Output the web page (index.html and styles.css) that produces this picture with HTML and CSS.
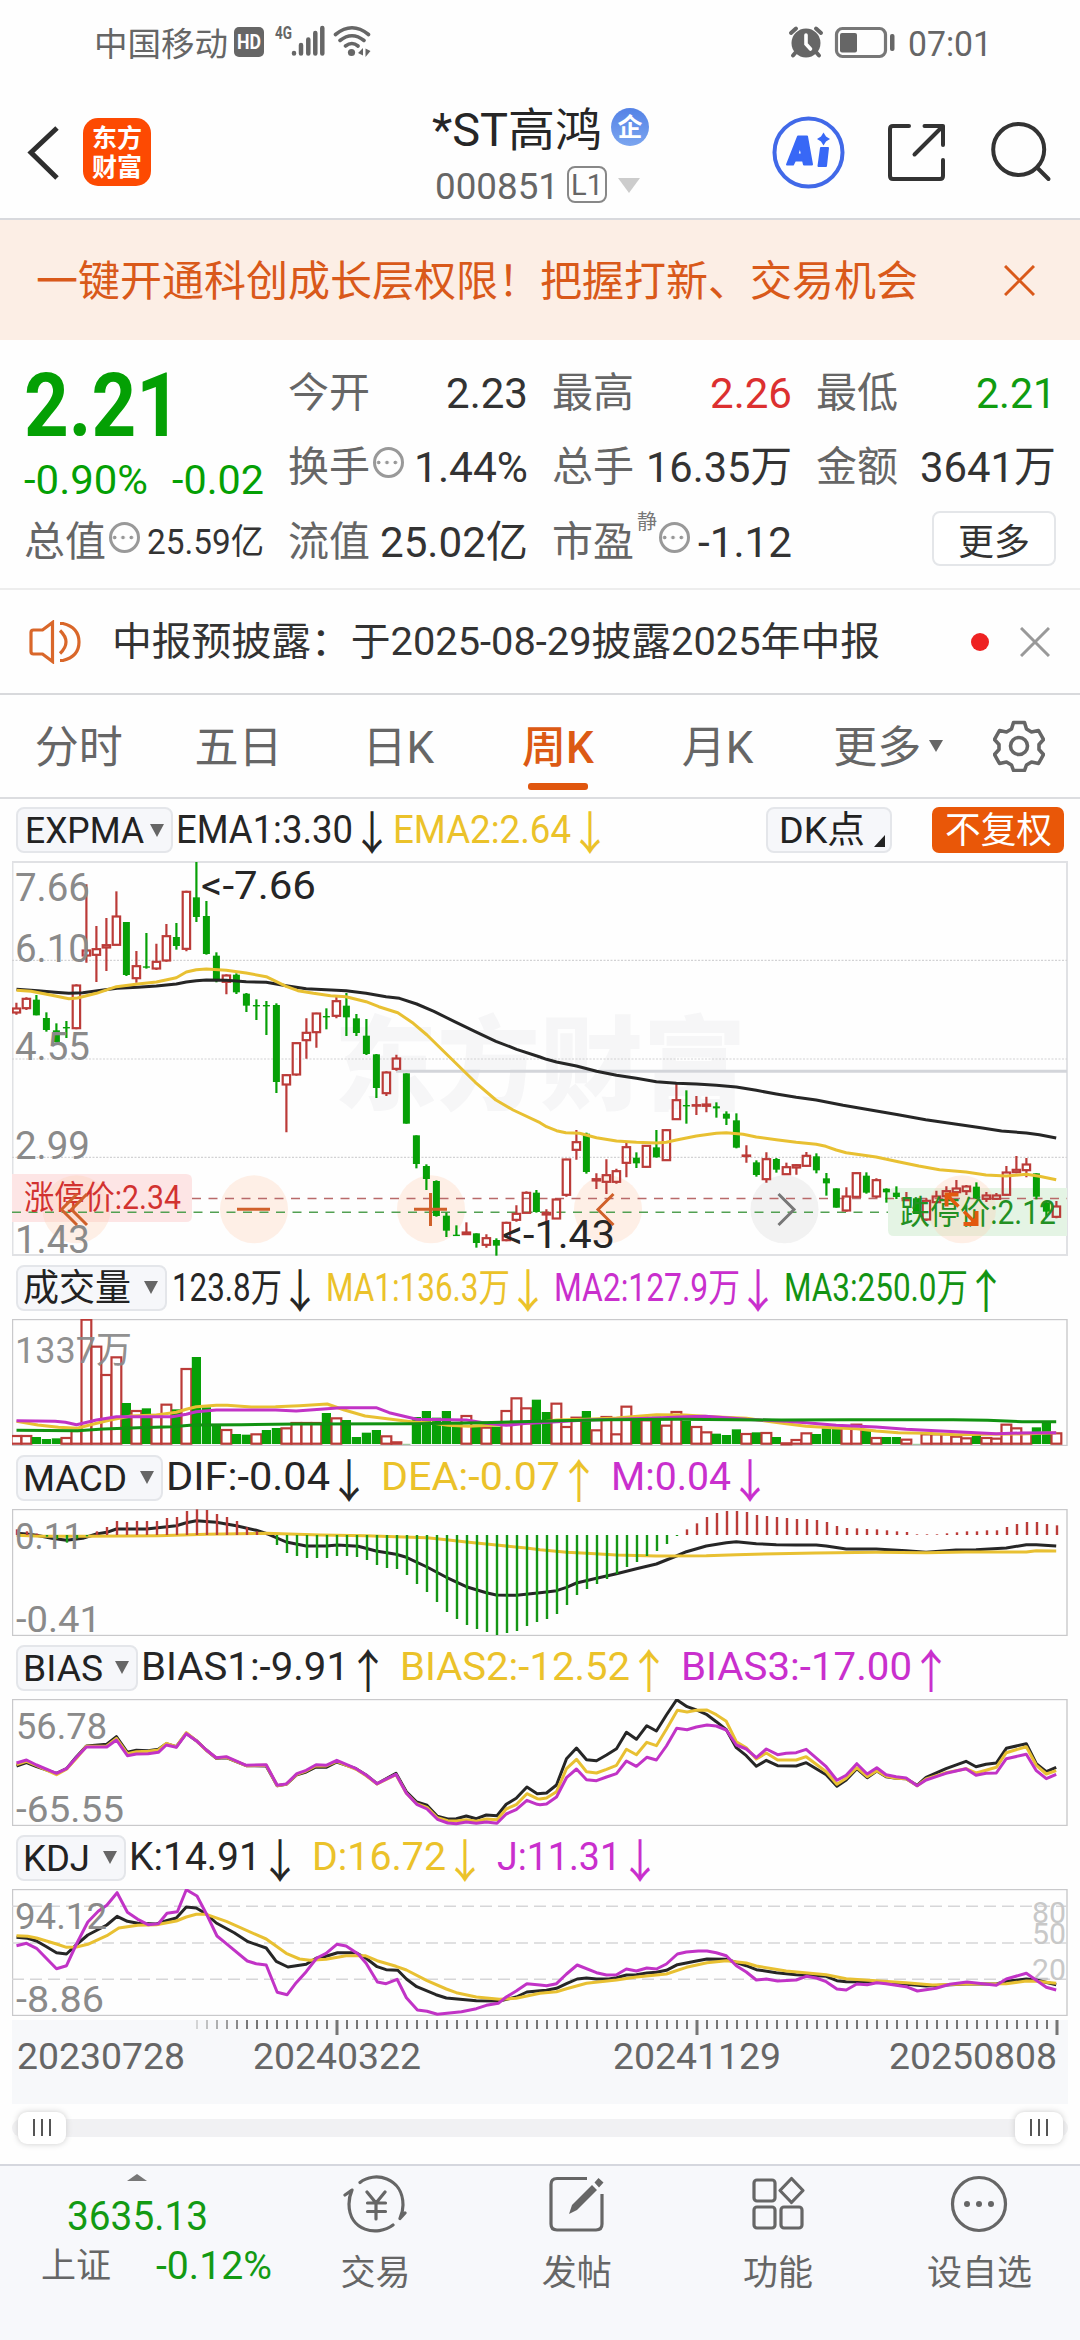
FILE: index.html
```html
<!DOCTYPE html>
<html lang="zh-CN">
<head>
<meta charset="utf-8">
<title>*ST高鸿 000851</title>
<link rel="stylesheet" href="styles.css">
</head>
<body>
<div class="status">
  <span class="carrier fit" data-w="134">中国移动</span>
  <svg class="status-left" width="146" height="40" viewBox="232 24 146 40">
    <rect x="234" y="28" width="30" height="30" rx="5" fill="#666"/>
    <text x="237" y="49.500" class="hd" textLength="24" lengthAdjust="spacingAndGlyphs">HD</text>
    <text x="275" y="40" class="g4" textLength="17" lengthAdjust="spacingAndGlyphs">4G</text>
    <g stroke="#666" stroke-width="4.500" stroke-linecap="round"><path d="M294 54v.5M301 46v8.500M308.300 40.500v14M315.300 34v20.500M322.300 29v25.500"/></g>
    <g fill="none" stroke="#666" stroke-width="3.600" stroke-linecap="round"><path d="M335.500 35.500Q352 22 368.500 35.500M340 41.500Q352 32 364 41.500M345.500 47Q352 42 358 47"/></g>
    <circle cx="351.500" cy="53.500" r="3.600" fill="#666"/>
    <path d="M358 54l5-5v7.500zM365.500 49.500v8.500l5-6z" fill="#666"/>
  </svg>
  <svg class="status-right" width="110" height="40" viewBox="787 23 110 40">
    <circle cx="806" cy="43" r="14.500" fill="#666"/>
    <path d="M791 33l5-4.500M821 33l-5-4.500M796 52l-3 3.500M816 52l3 3.500" stroke="#666" stroke-width="4" stroke-linecap="round"/>
    <path d="M806 35v9l4.500 5" stroke="#fff" stroke-width="3.600" fill="none" stroke-linecap="round"/>
    <rect x="836.500" y="28.500" width="49" height="28" rx="6" fill="none" stroke="#777" stroke-width="3.200"/>
    <rect x="840" y="33" width="17" height="19.500" rx="2" fill="#666"/>
    <rect x="890" y="34" width="4.500" height="17" rx="2" fill="#666"/>
  </svg>
  <span class="clock fit" data-w="84">07:01</span>
</div>

<header class="head">
  <svg class="back" width="40" height="60" viewBox="24 122 40 60"><path d="M57 128L31 152.500L57 178" fill="none" stroke="#2e2e2e" stroke-width="5"/></svg>
  <div class="logo"><span>东方</span><span>财富</span></div>
  <div class="title">
    <div class="name"><span class="fit" data-w="170">*ST高鸿</span><i class="qi">企</i></div>
    <div class="code"><span class="fit" data-w="124">000851</span><i class="lv"><b class="fit" data-w="32">L1</b></i><i class="caret"></i></div>
  </div>
  <svg class="head-icons" width="290" height="80" viewBox="768 112 290 80">
    <circle cx="808.500" cy="152.500" r="34" fill="none" stroke="#4169e8" stroke-width="4"/>
    <path fill="#3868f6" stroke="#3868f6" stroke-width="2" stroke-linejoin="round" fill-rule="evenodd" d="M798 136.500h9l5 28h-8l-1-4h-8l-2 4h-6zM800 146l-2.500 8.500h4.500zM821 148h7l-2 18h-7.500z"/>
    <path fill="#3868f6" d="M823.500 132.500l2.500 4 4 2.500-4 2.500-2.500 4-2.500-4-4-2.500 4-2.500z"/>
    <g fill="none" stroke="#333" stroke-width="4" stroke-linecap="round" stroke-linejoin="round">
      <path d="M909 126h-16q-3 0-3 3v47q0 3 3 3h47q3 0 3-3v-16M924.500 126h18.500v19M943 126l-28.500 28.500"/>
      <circle cx="1018.700" cy="149.500" r="25.500"/><path d="M1037.500 168l11 11"/>
    </g>
  </svg>
</header>

<section class="banner">
  <span class="fit" data-w="882">一键开通科创成长层权限！把握打新、交易机会</span>
  <svg width="31" height="31" viewBox="0 0 31 31"><path d="M1 1l29 29M30 1L1 30" stroke="#d9591a" stroke-width="3"/></svg>
</section>

<section class="quote">
  <div class="price">
    <div class="big"><span class="fit" data-w="157">2.21</span></div>
    <div class="chg"><span class="fit" data-w="124">-0.90%</span><span class="fit" data-w="92">-0.02</span></div>
  </div>
  <div class="cell"><label>今开</label><span class="fit" data-w="82">2.23</span></div>
  <div class="cell"><label>最高</label><span class="fit up" data-w="82">2.26</span></div>
  <div class="cell"><label>最低</label><span class="fit down" data-w="80">2.21</span></div>
  <div class="cell"><label>换手</label><i class="dots"></i><span class="fit" data-w="114">1.44%</span></div>
  <div class="cell"><label>总手</label><span class="fit" data-w="146">16.35万</span></div>
  <div class="cell"><label>金额</label><span class="fit" data-w="136">3641万</span></div>
  <div class="cell small"><label>总值</label><i class="dots"></i><span class="fit" data-w="117">25.59亿</span></div>
  <div class="cell"><label>流值</label><span class="fit" data-w="148">25.02亿</span></div>
  <div class="cell"><label>市盈</label><sup>静</sup><i class="dots"></i><span class="fit" data-w="94">-1.12</span></div>
  <div class="cell"><button class="more"><span class="fit" data-w="72">更多</span></button></div>
</section>

<section class="notice">
  <svg width="52" height="44" viewBox="29 619 52 44"><g fill="none" stroke="#d9672a" stroke-width="3.200"><path d="M52.500 621.500v39l-10-7.500h-9q-2.500 0-2.500-2.500v-19q0-2.500 2.500-2.500h9zM60 629.500q12 11.500 0 23M60 622.500h3q16 4 16 18.500t-16 18.500h-3"/></g></svg>
  <span class="fit news" data-w="768">中报预披露：于2025-08-29披露2025年中报</span>
  <i class="reddot"></i>
  <svg width="30" height="30" viewBox="0 0 30 30"><path d="M1 1l28 28M29 1L1 29" stroke="#999" stroke-width="3"/></svg>
</section>

<nav class="tabs">
  <a>分时</a><a>五日</a><a>日K</a><a class="on">周K</a><a>月K</a><a class="has-menu">更多<i></i></a>
  <svg width="52" height="52" viewBox="0 0 52 52"><path fill="none" stroke="#666" stroke-width="3.600" stroke-linejoin="round" d="M20.500 2.500h11l2 6.500 5 3 7-1.500 5 9-4.500 5v5l4.500 5-5 9-7-1.500-5 3-2 5.500h-11l-2-5.500-5-3-7 1.500-5-9 4.500-5v-5l-4.500-5 5-9 7 1.500 5-3z"/><circle cx="26" cy="26" r="8.500" fill="none" stroke="#666" stroke-width="3.600"/></svg>
</nav>

<main>
  <div class="row r1">
    <span class="pick" style="width:157px"><b class="fit" data-w="119">EXPMA</b><i></i></span>
    <span class="fit k" data-w="177">EMA1:3.30</span><em class="k">↓</em>
    <span class="fit y" data-w="178">EMA2:2.64</span><em class="y">↓</em>
    <span class="pick dk"><b class="fit" data-w="86">DK点</b><i></i></span>
    <span class="adj"><b class="fit" data-w="107">不复权</b></span>
  </div>
  <svg id="main" width="1056" height="395" viewBox="12 861 1056 395"></svg>

  <div class="row r2">
    <span class="pick" style="width:151px"><b class="fit" data-w="108">成交量</b><i></i></span>
    <span class="fit k" data-w="110">123.8万</span><em class="k">↓</em>
    <span class="fit y" data-w="184">MA1:136.3万</span><em class="y">↓</em>
    <span class="fit p" data-w="186">MA2:127.9万</span><em class="p">↓</em>
    <span class="fit g" data-w="184">MA3:250.0万</span><em class="g">↑</em>
  </div>
  <svg id="vol" width="1056" height="127" viewBox="12 1319 1056 127"></svg>

  <div class="row r3">
    <span class="pick" style="width:147px"><b class="fit" data-w="104">MACD</b><i></i></span>
    <span class="fit k" data-w="164">DIF:-0.04</span><em class="k">↓</em>
    <span class="fit y" data-w="179">DEA:-0.07</span><em class="y">↑</em>
    <span class="fit p" data-w="120">M:0.04</span><em class="p">↓</em>
  </div>
  <svg id="macd" width="1056" height="127" viewBox="12 1509 1056 127"></svg>

  <div class="row r4">
    <span class="pick" style="width:122px"><b class="fit" data-w="80">BIAS</b><i></i></span>
    <span class="fit k" data-w="208">BIAS1:-9.91</span><em class="k">↑</em>
    <span class="fit y" data-w="230">BIAS2:-12.52</span><em class="y">↑</em>
    <span class="fit p" data-w="231">BIAS3:-17.00</span><em class="p">↑</em>
  </div>
  <svg id="bias" width="1056" height="127" viewBox="12 1699 1056 127"></svg>

  <div class="row r5">
    <span class="pick" style="width:110px"><b class="fit" data-w="67">KDJ</b><i></i></span>
    <span class="fit k" data-w="132">K:14.91</span><em class="k">↓</em>
    <span class="fit y" data-w="134">D:16.72</span><em class="y">↓</em>
    <span class="fit p" data-w="124">J:11.31</span><em class="p">↓</em>
  </div>
  <svg id="kdj" width="1056" height="127" viewBox="12 1889 1056 127"></svg>

  <div class="axis">
    <svg id="ticks" width="1056" height="16" viewBox="12 2020 1056 16"></svg>
    <div class="dates"><span class="fit" data-w="168">20230728</span><span class="fit" data-w="168">20240322</span><span class="fit" data-w="168">20241129</span><span class="fit" data-w="168">20250808</span></div>
  </div>
  <div class="slider"><div class="track"><i></i><i></i></div></div>
</main>

<footer>
  <div class="index">
    <i class="upcaret"></i>
    <div><span class="fit" data-w="141">3635.13</span></div>
    <div class="line2"><label>上证</label><span class="fit" data-w="116">-0.12%</span></div>
  </div>
  <div class="item"><svg viewBox="0 0 66 60" width="66" height="60"><g fill="none" stroke="#666" stroke-width="3.200" stroke-linecap="round" stroke-linejoin="round"><path d="M17 8.500C31-3 60 3 60 31c0 5-1 9-3 13.500l5-5.500M50 51C34 63 6 57 6 30q0-7 3-14l-7 5M24 18l9 11 9-11M33 29v16M24.500 29h18M24.500 37.500h18"/></g></svg><span>交易</span></div>
  <div class="item"><svg viewBox="0 0 66 60" width="66" height="60"><path d="M43 4.500H13q-6 0-6 6V50q0 6 6 6h39q6 0 6-6V20" fill="none" stroke="#666" stroke-width="3.200"/><path d="M25 40l3-9 20-20 5 5-20 20zM50.500 8.500l4-4.500 5 4.500-4.500 5z" fill="#666"/></svg><span>发帖</span></div>
  <div class="item"><svg viewBox="0 0 66 60" width="66" height="60"><g fill="none" stroke="#666" stroke-width="3.200"><rect x="9" y="6" width="21" height="21" rx="3"/><rect x="9" y="33" width="21" height="21" rx="3"/><rect x="36" y="33" width="21" height="21" rx="3"/><path d="M46.500 4.500L58 16.500 46.500 28.500 35 16.500z" stroke-linejoin="round"/></g></svg><span>功能</span></div>
  <div class="item"><svg viewBox="0 0 66 60" width="66" height="60"><circle cx="33" cy="30" r="26.500" fill="none" stroke="#666" stroke-width="3.200"/><g fill="#666"><circle cx="21" cy="30" r="3"/><circle cx="33" cy="30" r="3"/><circle cx="45" cy="30" r="3"/></g></svg><span>设自选</span></div>
</footer>
<script src="chart.js"></script>
</body>
</html>
```

FILE: styles.css
```css
* { box-sizing: border-box; }
body { margin: 0; width: 1080px; height: 2340px; overflow: hidden; background: #fefefe; color: #333; font-family: Roboto, "Noto Sans CJK SC", sans-serif; line-height: 1; }
i, em, b { font-style: normal; font-weight: inherit; }
svg { display: block; flex: none; }
.fit { display: block; flex: none; white-space: nowrap; transform-origin: 0 50%; }

.status { height: 86px; display: flex; align-items: center; padding-left: 94px; color: #666; font-size: 33px; }
.carrier, .clock { padding-top: 2px; }
.status-left { margin-left: 4px; }
.status-right { margin-left: 409px; }
.clock { margin-left: 11px; font-size: 35px; }
.hd { font: bold 20px Roboto; fill: #fff; }
.g4 { font: bold 18px Roboto; fill: #666; }

.head { height: 134px; border-bottom: 2px solid #d8d9dd; display: flex; align-items: center; padding-left: 24px; }
.back { margin-left: 0; }
.logo { margin-left: 19px; width: 68px; height: 68px; border-radius: 15px; background: #fd4a02; color: #fff; font-weight: 700; font-size: 25px; display: flex; flex-direction: column; align-items: center; justify-content: center; gap: 4px; padding-top: 2px; }
.title { margin-left: 281px; width: 320px; height: 112px; }
.name { display: flex; align-items: center; height: 60px; font-size: 46px; color: #262626; margin-top: 1px; }
.name .fit { padding-top: 6px; }
.qi { margin-left: 9px; width: 38px; height: 38px; border-radius: 50%; background: linear-gradient(#5482e6, #7ba5ef); color: #fff; font-size: 25px; font-weight: 700; display: flex; align-items: center; justify-content: center; }
.code { display: flex; align-items: center; font-size: 37px; color: #666; margin-top: 7px; height: 38px; padding-left: 3px; }
.code > .fit { padding-top: 6px; }
.lv { margin: 3px 0 0 8px; width: 40px; height: 37px; border: 2px solid #888; border-radius: 8px; font-size: 30px; display: flex; align-items: center; justify-content: center; }
.caret { margin: 4px 0 0 11px; border: 11px solid transparent; border-top: 15px solid #ccc; border-bottom: 0; }
.head-icons { margin-left: 16px; }

.banner { height: 120px; background: #fceee5; color: #d9591a; font-size: 42px; display: flex; align-items: center; justify-content: space-between; padding: 0 45px 0 36px; }
.banner .fit { padding-top: 4px; }

.quote { height: 250px; border-bottom: 2px solid #ededed; padding: 15px 24px 0; display: grid; grid-template-columns: repeat(4, 240px); grid-template-rows: 74px 75px 74px; column-gap: 24px; }
.price { grid-row: 1 / 3; grid-column: 1; color: #04a004; }
.big { font-size: 89px; font-weight: 700; height: 98px; padding-top: 6px; }
.chg { display: flex; justify-content: space-between; font-size: 41px; height: 54px; align-items: center; }
.cell { display: flex; align-items: center; justify-content: space-between; font-size: 43px; padding-top: 2px; }
.cell label { font-size: 41px; color: #666; flex: none; margin-right: 1px; }
.small .fit { font-size: 35px; }
.up { color: #dc3030; }
.down { color: #109c10; }
.dots { width: 31px; height: 31px; border: 3px solid #999; border-radius: 50%; margin: 0 auto 10px 2px; flex: none; background: radial-gradient(circle, #999 1.500px, transparent 2.200px) -1.500px 0 / 9px 25px round; }
.cell sup { font-size: 20px; color: #777; align-self: flex-start; margin: 6px 0 0 2px; line-height: 20px; vertical-align: baseline; }
.more { margin-left: auto; width: 124px; height: 55px; border: 2px solid #e4e6e9; border-radius: 8px; background: #fff; font: 36px/1 "Noto Sans CJK SC", sans-serif; color: #333; display: flex; align-items: center; justify-content: center; padding: 0; margin-top: -7px; }

.notice { height: 105px; border-bottom: 2px solid #d8d9dc; display: flex; align-items: center; padding: 0 30px 0 29px; font-size: 39px; }
.news { margin-left: 31px; padding-top: 2px; }
.reddot { width: 18px; height: 18px; border-radius: 50%; background: #ee2222; margin: 0 31px 0 auto; }

.tabs { height: 104px; border-bottom: 2px solid #dcdde0; display: flex; align-items: stretch; color: #666; font-size: 44px; }
.tabs a { width: 159.700px; display: flex; align-items: center; justify-content: center; position: relative; padding: 4px 2px 0 0; }
.tabs .on { color: #dc5a14; font-weight: 500; }
.tabs .on::after { content: ""; position: absolute; left: 49px; bottom: 7px; width: 60px; height: 7px; border-radius: 3px; background: #e0560e; }
.has-menu i { border: 7px solid transparent; border-top: 12px solid #666; border-bottom: 0; margin: -4px -22px 0 8px; }
.tabs svg { align-self: center; margin-left: 35px; }

main { padding: 0 12px; }
.row { height: 63px; display: flex; align-items: center; padding-left: 4px; font-size: 39px; }
.row em { width: 20px; display: flex; justify-content: center; font-family: "Noto Sans CJK SC", sans-serif; font-size: 38px; margin-left: 9px; flex: none; transform: scale(1.12, 1.22); }
.pick { height: 46px; border: 2px solid #e4e6ea; border-radius: 8px; background: #f6f7fa; display: flex; align-items: center; justify-content: space-between; padding: 0 7px 0 5px; font-size: 37px; color: #222; flex: none; margin-right: 3px; }
.pick i { border: 7.500px solid transparent; border-top: 13px solid #666; border-bottom: 0; }
.pick .fit, .adj .fit { padding-top: 1px; }
.r1 { height: 62px; font-size: 38px; }
.r1 .pick { padding-left: 7px; }
.r1 em + .fit { margin-left: 11px; }
.r1 .dk { width: 126px; margin: 0 0 0 auto; padding: 0 5px 0 11px; }
.r1 .dk i { border: 0; width: 11px; height: 12px; background: #222; clip-path: polygon(100% 0, 100% 100%, 0 100%); align-self: flex-end; margin-bottom: 4px; }
.adj { width: 132px; height: 46px; border-radius: 7px; background: #e95708; color: #fff; margin: 0 4px 0 40px; display: flex; align-items: center; justify-content: center; font-size: 36px; }
.r2 .pick { margin-right: 5px; }
.r2 > .fit { padding-top: 2px; }
.r2 em { margin-left: 8px; }
.r2 em + .fit { margin-left: 16px; }
.r3 em + .fit, .r4 em + .fit, .r5 em + .fit { margin-left: 22px; }
.k { color: #262626; } .y { color: #ebc22a; } .p { color: #c92fcd; } .g { color: #139313; }
main svg text { font-family: Roboto, "Noto Sans CJK SC", sans-serif; }

.axis { margin-top: 4px; height: 84px; background: #f7f8fa; }
.dates { display: flex; padding: 0 10px 0 5px; margin-top: 1px; font-size: 37px; color: #666; height: 38px; align-items: center; }
.dates .fit:nth-child(2) { margin-left: 68px; }
.dates .fit:nth-child(3) { margin-left: 192px; }
.dates .fit:nth-child(4) { margin-left: 108px; }
.slider { height: 60px; padding-top: 15px; }
.track { height: 18px; border-radius: 9px; background: #f1f1f3; display: flex; align-items: center; justify-content: space-between; padding: 0 5px 0 6px; }
.track i { width: 48px; height: 32px; border-radius: 9px; box-shadow: 0 0 6px #ccc; background: linear-gradient(90deg, #555 2px, transparent 2px) 15px 7px / 7.500px 17px no-repeat, linear-gradient(90deg, #555 2px, transparent 2px) 23px 7px / 7.500px 17px no-repeat, linear-gradient(90deg, #555 2px, transparent 2px) 31px 7px / 7.500px 17px no-repeat, #fff; }

footer { height: 176px; border-top: 2px solid #d5d7de; background: #f7f8fb; display: flex; }
.index { width: 275px; font-size: 41px; color: #139a13; padding-top: 8px; display: flex; flex-direction: column; align-items: center; }
.upcaret { border: 10px solid transparent; border-bottom: 7px solid #777; border-top: 0; margin-bottom: 15px; }
.line2 { display: flex; align-items: center; justify-content: space-between; width: 231px; margin: 8px 0 0 38px; font-size: 38px; height: 42px; }
.line2 label { color: #666; font-size: 35px; }
.item { width: 201.300px; display: flex; flex-direction: column; align-items: center; padding-top: 8px; font-size: 35px; color: #666; gap: 22px; }
```

FILE: chart.js
```js
// Squeeze or stretch each fitted label to its cell width.
document.querySelectorAll('.fit').forEach(function (el) {
  var r = document.createRange();
  r.selectNodeContents(el);
  var natural = r.getBoundingClientRect().width;
  var w = +el.dataset.w;
  el.style.transform = 'scaleX(' + w / natural + ')';
  // the margin makes up the difference, so neighbours see the scaled width
  el.style.width = natural + 'px';
  el.style.marginRight = (w - natural) + 'px';
});

var RED = '#bb3b38', GREEN = '#07a007', K = '#262626', Y = '#e8c032', P = '#c133c6';
var SX = 1568 / 540;
function px(i) { return 16.4 + 10 * i; }
function text(x, y, s, w, size, color, extra) {
  return '<text x="' + x + '" y="' + y + '" font-size="' + size + '" fill="' + color + '" textLength="' + w + '" lengthAdjust="spacingAndGlyphs" ' + (extra || '') + '>' + s.replace('<', '&lt;') + '</text>';
}
function frame(y, h, c, sw) { return '<rect x="12.5" y="' + y + '" width="1054.500" height="' + h + '" fill="none" stroke="' + c + '" stroke-width="' + sw + '"/>'; }
// Two halves of a polyline, separated by "|", each a list of x,y pairs.
function line(data, top, color, w) {
  var pts = [];
  data.split('|').forEach(function (half, h) {
    half.trim().split(/\s+/).forEach(function (p) {
      var a = p.split(',');
      pts.push((h * 540 + a[0] / SX).toFixed(1) + ',' + (top + a[1] / 3).toFixed(1));
    });
  });
  return '<polyline fill="none" stroke-linejoin="round" stroke="' + color + '" stroke-width="' + (w || 3) + '" points="' + pts.join(' ') + '"/>';
}
function put(id, s) { document.getElementById(id).innerHTML = s; }

// colour, high, body top, body bottom, low
var candles = 'R458,474,489,494 R442,445,476,480 G435,449,496,496 G487,504,540,545 G520,541,577,577 G513,531,535,564 R403,405,536,538 R103,300,318,338 R228,296,316,396 R204,284,294,363 R124,198,286,286 G216,216,375,378 R303,347,386,398 G249,349,353,356 R281,334,357,360 R222,257,333,335 G219,261,288,299 R122,124,298,304 G36,142,201,216 G153,198,312,314 G307,317,393,397 R373,375,397,433 G370,374,427,432 G429,431,467,486 G448,465,469,510 G453,465,468,555 G460,465,696,729 R672,674,705,847 R577,578,675,677 R505,547,572,626 R488,489,548,593 G475,498,502,538 R440,452,499,505 G429,467,502,558 G492,505,549,558 G507,557,612,615 G612,613,714,744 R664,666,731,738 R614,624,658,662 G670,670,821,821 G856,856,942,955 G943,948,987,1020 G991,993,1098,1100 G1088,1097,1142,1161 G1126,1154,1158,1158 R1117,1146,1154,1154 G1150,1150,1179,1193 R1153,1163,1186,1193 G1165,1170,1187,1217 R1115,1117,1172,1174 R1066,1090,1111,1115 R1024,1027,1090,1090 G1020,1028,1086,1088 R1078,1087,1095,1117 R1046,1047,1107,1107 R926,927,1036,1040 R840,875,901,929 G848,851,966,971 R970,986,993,1017 R928,974,997,1032 R956,962,997,1001 R879,890,940,982 G907,923,940,954 R885,886,952,953 G840,892,922,923 R837,839,932,933 R699,749,809,809 G721,765,768,821 R738,764,768,795 R740,762,769,787 G757,769,775,803 G784,791,806,825 G790,811,893,895 R886,915,919,938 G931,937,975,980 R907,926,989,998 G924,927,959,968 R938,950,974,974 R942,944,954,974 R906,916,949,950 G910,919,961,970 G969,985,1000,1037 G1015,1015,1073,1073 R1012,1038,1083,1085 R967,968,1042,1044 G967,977,1028,1031 R985,989,1041,1044 G1015,1016,1027,1058 G1009,1028,1041,1047 R1026,1044,1052,1052 G1045,1045,1092,1092 R1045,1051,1110,1113 R1022,1038,1058,1060 R1009,1022,1040,1043 R990,1014,1028,1030 R1005,1008,1025,1035 G997,1010,1045,1047 R1026,1035,1048,1056 R1029,1035,1048,1050 R948,966,1036,1037 R918,958,968,970 R924,942,962,982 G970,970,1040,1048 G1055,1058,1085,1100 R1053,1068,1102,1105'.split(' ');

(function drawMain() {
  var s = frame(862, 393, '#e0e1e4', 2);
  s += text(334, 1102, '东方财富', 412, 102, '#f6f6f7', 'font-weight="900"');
  [960.3, 1059, 1157.3].forEach(function (y) { s += '<path d="M12 ' + y + 'H1067" stroke="#d2d2d4" stroke-width="1.200" stroke-dasharray="2 1.500"/>'; });
  s += '<path d="M396 1071.300H1067" stroke="#d3d5da" stroke-width="3"/>';
  s += '<path d="M12 1174h174q6 0 6 6v36q0 6-6 6H12z" fill="#fde5e5"/><path d="M1067 1188H894q-6 0-6 6v36q0 6 6 6h173z" fill="#e4f4e4"/>';
  [76.5, 254, 431, 608, 784.5, 962].forEach(function (x, i) { s += '<circle cx="' + x + '" cy="1209.300" r="34" fill="' + (i === 4 ? '#e8e8e8' : '#ffcdb0') + '" fill-opacity="' + (i === 4 ? .55 : .3) + '"/>'; });
  s += '<path d="M192 1198.500H1067" stroke="#b96a6a" stroke-width="1.500" stroke-dasharray="9 7.500"/><path d="M12 1212.300H888" stroke="#52a052" stroke-width="1.500" stroke-dasharray="9 7.500"/>';
  candles.forEach(function (c, i) {
    var v = c.slice(1).split(',').map(function (n) { return 850 + n / 3; }), x = px(i);
    if (c[0] === 'G') {
      s += '<path d="M' + x + ' ' + v[0] + 'V' + v[3] + '" stroke="' + GREEN + '" stroke-width="2.200"/><rect x="' + (x - 3.5) + '" y="' + v[1] + '" width="7" height="' + Math.max(1.4, v[2] - v[1]) + '" fill="' + GREEN + '"/>';
    } else {
      s += '<path d="M' + x + ' ' + v[0] + 'V' + v[1] + 'M' + x + ' ' + v[2] + 'V' + v[3] + '" stroke="' + RED + '" stroke-width="2.200"/><rect x="' + (x - 3.7) + '" y="' + (v[1] + 0.5) + '" width="7.400" height="' + Math.max(0.5, v[2] - v[1] - 1) + '" fill="none" stroke="' + RED + '" stroke-width="2.200"/>';
    }
  });
  s += line('48,418 110,422 160,427 200,430 240,428 300,420 340,415 400,412 454,408 512,402 541,396 570,392 599,390 657,391 715,395 773,397 831,407 889,416 947,419 1005,422 1063,430 1121,440 1160,445 1210,462 1260,484 1320,515 1380,545 1440,574 1500,598 1568,621|19,628 48,636 106,648 164,664 222,676 280,685 338,695 396,700 454,702 512,706 570,711 628,721 686,732 744,742 802,750 880,766 960,780 1040,794 1120,809 1200,821 1280,833 1340,843 1412,849 1450,854 1499,864', 850, K);
  s += line('48,421 90,424 150,436 200,446 225,444 280,430 338,410 400,402 454,396 512,383 541,366 570,359 599,357 657,361 715,369 773,380 831,409 865,422 910,430 960,437 1005,440 1063,455 1100,470 1155,488 1200,520 1240,555 1300,616 1380,697 1440,750 1490,780 1568,818|19,830 48,842 75,848 115,850 164,863 222,873 280,877 338,879 367,877 396,870 454,858 512,850 541,848 590,853 628,861 686,869 744,877 802,883 830,889 860,900 889,908 976,921 1040,935 1100,948 1160,959 1237,966 1295,975 1354,978 1412,973 1450,979 1499,989', 850, Y);
  [['7.66', 901], ['6.10', 962], ['4.55', 1060], ['2.99', 1159], ['1.43', 1252.5]].forEach(function (l) { s += text(15, l[1], l[0], 75, 38.5, '#8a8a8a'); });
  s += text(201, 899, '<-7.66', 115, 39, K) + text(502, 1247.5, '<-1.43', 113, 39, K);
  s += text(24, 1209, '涨停价:2.34', 157, 33, '#d23230') + text(900, 1223.5, '跌停价:2.12', 156, 33, '#239023');
  s += '<g fill="none" stroke="#d0602a" stroke-width="3"><path d="M77 1194L61.500 1209.500L77 1225M87 1194L71.500 1209.500L87 1225M237 1209.300h33M414 1209.300h33M430.500 1193v33M613.500 1194L598 1209.500L613.500 1225"/><path stroke="#777" d="M778.500 1194L794 1209.500L778.500 1225"/><path stroke="#e2590f" d="M948 1196l10.500 10.500M974.500 1222L964 1211.500" stroke-width="3.500"/></g><path fill="#e2590f" d="M944.500 1192.500h14v4l-7 0-3 3v7h-4zM978.500 1226h-15v-4h7l4-4v-7h4z"/>';
  put('main', s);
})();

(function drawVolume() {
  var tops = [525,525,531,537,535,531,510,176,257,342,289,429,450,445,462,431,448,324,291,442,494,507,522,524,520,510,504,502,486,486,486,459,472,480,531,518,510,526,544,553,471,453,473,453,490,465,500,500,500,450,412,442,419,456,428,498,470,453,508,468,520,437,475,478,470,494,453,483,498,514,521,525,508,519,517,516,531,547,537,517,522,505,505,500,491,510,531,531,531,536,553,520,520,520,527,532,525,531,533,491,502,516,502,488,517];
  // bars whose colour differs from the candle above them
  var flip = { 5: 'R', 24: 'R', 25: 'G', 44: 'G', 53: 'G' };
  var s = frame(1319.5, 126, '#c9c9cb', 1.4);
  tops.forEach(function (t, i) {
    var x = px(i), y = 1260 + t / 3;
    if (t > 550) { s += '<path d="M' + (x - 4) + ' 1444.300h8" stroke="#8cbf8c"/>'; return; }
    if ((flip[i] || candles[i][0]) === 'G') s += '<rect x="' + (x - 4.6) + '" y="' + y + '" width="9.200" height="' + (1444 - y) + '" fill="' + GREEN + '"/>';
    else s += '<rect x="' + (x - 4.9) + '" y="' + (y + 1) + '" width="9.800" height="' + Math.max(1, 1442.7 - y) + '" fill="#fff" stroke="' + RED + '" stroke-width="2.200"/>';
  });
  s += line('48,484 110,495 170,502 225,505 260,495 320,480 380,468 454,465 512,457 541,448 570,440 628,436 660,436 730,441 800,440 870,437 950,432 1000,450 1060,468 1130,477 1200,486 1260,490 1300,496 1360,499 1440,495 1490,492 1568,487|48,480 135,478 222,474 338,464 420,465 500,470 600,475 660,484 715,491 773,499 860,504 920,506 976,513 1040,518 1121,520 1208,524 1300,523 1400,522 1499,518', 1260, Y);
  s += line('48,482 160,484 190,487 222,494 280,480 338,470 500,470 541,463 570,455 628,450 800,450 860,453 930,448 990,443 1092,443 1130,458 1210,478 1354,480 1412,490 1470,496 1530,490 1568,488|135,480 222,478 338,474 425,470 480,469 540,473 600,478 715,484 773,488 860,496 976,501 1063,508 1150,512 1237,517 1325,521 1400,519 1499,518', 1260, P);
  s += line('48,511 225,512 300,507 400,503 500,500 560,495 700,494 860,492 1200,491 1400,488 1568,484|48,482 200,479 400,478 700,480 900,479 1200,479 1300,481 1400,485 1499,485', 1260, '#129212');
  s += text(15, 1363, '1337万', 117, 37, '#8a8a8a', 'fill-opacity=".95"');
  put('vol', s);
})();

(function drawMacd() {
  var ends = [808,814,821,830,837,848,836,829,814,801,783,786,783,783,783,774,771,753,748,750,762,771,783,802,814,824,855,879,888,894,894,894,888,888,891,900,915,924,927,945,972,996,1026,1056,1077,1095,1107,1116,1125,1119,1113,1098,1086,1077,1062,1035,1005,987,972,957,942,921,906,888,873,852,828,808,790,771,759,753,753,756,765,768,771,774,777,777,780,786,798,804,805,807,808,811,814,816,823,823,823,820,817,814,814,811,811,801,792,786,786,792,796];
  var s = frame(1509.5, 126, '#c9c9cb', 1.4);
  s += line('48,820 77,822 106,826 150,835 193,841 240,835 280,822 310,817 338,807 425,807 512,797 541,788 570,782 628,787 686,797 744,811 780,823 831,846 889,858 947,858 980,855 1040,859 1092,873 1150,883 1180,892 1240,921 1296,952 1354,980 1412,998 1441,1005 1500,1006 1568,998|19,996 48,992 77,982 106,969 164,955 222,941 280,926 338,912 396,888 425,875 483,858 541,848 570,845 628,851 686,854 744,855 802,855 831,858 889,867 976,867 1063,872 1121,877 1208,870 1266,869 1354,864 1412,854 1441,854 1499,858', 1260, K);
  s += line('48,826 120,829 250,829 460,827 600,823 773,820 930,825 1063,827 1150,830 1240,833 1296,839 1354,846 1441,855 1528,864 1568,869|77,877 135,880 222,885 338,888 483,887 570,884 686,881 802,879 976,877 1121,878 1237,876 1412,876 1441,872 1499,873', 1260, Y);
  ends.forEach(function (e, i) { s += '<path d="M' + (px(i) + 0.6) + ' 1535V' + (1260 + e / 3) + '" stroke="' + (e > 825 ? '#149614' : RED) + '" stroke-width="2.400"/>'; });
  s += text(15, 1549, '0.11', 68, 37, '#8a8a8a') + text(16, 1632, '-0.41', 85, 37, '#8a8a8a');
  put('macd', s);
})();

(function drawBias() {
  var s = frame(1699.5, 126, '#c9c9cb', 1.4);
  s += line('48,348 77,338 106,350 164,370 193,356 222,320 251,288 310,283 338,260 370,307 396,301 430,302 460,298 483,281 512,290 541,250 570,272 599,300 628,325 657,323 715,347 773,348 805,407 831,403 862,374 889,366 918,351 947,352 978,336 1034,356 1063,375 1095,401 1150,370 1180,425 1210,456 1240,466 1270,499 1300,507 1325,506 1354,498 1383,506 1412,495 1443,497 1470,463 1499,445 1530,411 1560,431|19,429 48,405 77,326 106,294 135,329 164,332 193,315 222,296 251,247 280,268 310,227 338,243 367,195 397,149 427,170 454,180 485,194 512,215 541,239 570,293 599,317 628,349 657,331 690,347 744,348 773,338 831,374 862,409 889,390 920,356 950,383 978,363 1005,380 1034,385 1063,386 1095,406 1121,382 1179,356 1237,334 1266,350 1295,343 1325,339 1354,295 1412,281 1441,341 1470,365 1499,352', 1650, K);
  s += line('48,344 77,334 106,347 164,374 193,358 222,325 251,289 310,288 338,265 370,311 396,305 430,304 460,300 483,280 512,290 541,248 570,272 599,301 628,324 657,322 715,347 773,346 805,407 831,403 862,373 889,363 918,347 947,348 978,334 1034,358 1063,377 1095,402 1150,374 1180,430 1210,461 1240,472 1270,503 1300,512 1325,513 1354,509 1383,514 1412,507 1443,509 1470,477 1499,464 1530,431 1560,446|0,447 19,444 48,425 77,356 106,328 135,365 164,369 193,358 222,346 251,298 280,314 310,277 338,287 367,238 399,181 427,186 454,181 485,180 512,194 541,214 570,275 599,293 628,327 657,309 690,330 744,330 773,320 831,365 862,403 889,385 920,353 950,380 978,362 1005,379 1034,385 1063,386 1095,407 1121,387 1179,368 1237,356 1266,369 1295,361 1325,352 1354,308 1412,290 1441,346 1470,372 1499,362', 1650, Y);
  s += line('48,339 77,330 106,345 164,370 193,356 222,322 251,291 310,291 338,270 370,317 396,312 430,311 460,307 483,285 512,292 541,251 570,272 599,300 628,323 657,320 715,346 773,344 805,406 831,402 862,371 889,361 918,344 947,346 978,331 1034,356 1063,375 1095,401 1150,373 1180,430 1210,463 1240,477 1270,508 1300,519 1325,521 1354,516 1383,520 1412,516 1443,520 1470,492 1499,479 1530,451 1560,463|0,464 19,462 48,441 77,383 106,357 135,389 164,392 193,381 222,371 251,333 280,349 310,322 338,330 367,288 397,235 427,239 454,231 485,225 512,228 541,240 570,285 599,297 628,323 657,297 690,314 715,310 744,308 773,298 831,350 862,391 889,376 920,341 950,372 978,353 1005,374 1034,380 1063,384 1095,407 1121,390 1179,370 1237,356 1266,376 1295,370 1325,369 1354,326 1412,313 1441,362 1470,386 1499,373', 1650, P);
  s += text(16, 1739, '56.78', 91, 37, '#8a8a8a') + text(16, 1822, '-65.55', 108, 37, '#8a8a8a');
  put('bias', s);
})();

(function drawKdj() {
  var s = frame(1889.5, 126, '#c9c9cb', 1.4);
  [1906.3, 1943, 1979.3].forEach(function (y) { s += '<path d="M12 ' + y + 'H1067" stroke="#d6d6d8" stroke-width="1.600" stroke-dasharray="12 6"/>'; });
  s += text(1032, 1923, '80', 34, 30, '#c8c8c8') + text(1032, 1944, '50', 34, 30, '#c8c8c8') + text(1032, 1980, '20', 34, 30, '#c8c8c8');
  s += line('48,862 80,865 106,873 135,890 164,908 193,912 222,884 255,855 310,825 340,799 370,814 400,820 454,822 483,812 512,804 541,771 570,774 599,792 628,819 680,848 720,875 773,894 802,934 836,951 889,943 918,925 947,919 980,908 1034,908 1063,925 1095,950 1121,959 1155,961 1180,987 1210,1010 1266,1034 1296,1044 1383,1052 1450,1053 1499,1041 1530,1026 1568,1022|19,1021 48,1015 77,1001 108,987 135,984 164,987 200,987 222,983 251,975 280,974 310,969 338,967 367,961 399,944 454,933 485,927 541,928 599,947 628,959 686,968 744,974 831,979 862,992 889,995 976,996 1063,1003 1121,1008 1237,1002 1325,1002 1354,994 1412,987 1441,990 1499,1004', 1650, K);
  s += line('48,857 80,859 106,864 164,882 193,892 222,891 255,883 310,857 345,834 400,826 454,824 512,813 541,801 570,793 599,793 657,814 744,854 773,867 831,910 870,927 900,931 947,928 1005,917 1060,917 1095,932 1150,949 1180,960 1240,992 1296,1017 1325,1028 1383,1041 1450,1048 1499,1045 1568,1030|48,1025 77,1016 135,1000 222,990 280,981 367,972 425,952 485,938 541,932 599,939 628,948 715,963 831,974 889,986 976,992 1063,998 1140,1005 1237,1002 1354,1001 1412,993 1441,994 1499,1000', 1650, Y);
  s += line('48,887 77,880 106,895 164,956 193,947 222,882 255,816 285,784 310,766 340,728 370,787 400,808 430,824 460,821 485,790 515,785 541,719 572,738 599,791 630,858 657,881 718,933 744,941 773,945 805,1027 834,1034 860,998 889,965 920,924 947,910 978,883 1005,888 1040,912 1063,940 1096,996 1121,1001 1153,988 1180,1043 1212,1080 1240,1084 1270,1093 1340,1085 1383,1076 1412,1066 1447,1060 1470,1041 1499,1023 1530,1001 1568,1005|19,1007 48,1001 77,972 108,945 164,968 193,975 222,974 251,957 280,963 310,954 338,957 367,942 399,912 425,906 460,903 485,903 512,908 541,917 570,947 599,966 628,990 657,987 690,993 744,990 773,979 802,984 831,995 862,1017 889,1020 920,1002 950,1004 978,998 1005,1001 1063,1010 1096,1023 1150,1015 1190,1003 1240,996 1325,1006 1354,987 1412,970 1470,1012 1499,1020', 1650, P);
  s += text(15, 1929, '94.12', 92, 37, '#8a8a8a') + text(16, 2012, '-8.86', 88, 37, '#8a8a8a');
  put('kdj', s);
})();

(function drawTicks() {
  var s = '';
  for (var i = 18; i <= 104; i++) {
    var long = i === 32 || i === 68 || i === 104;
    s += '<path d="M' + (px(i) + 0.6) + ' 2020v' + (long ? 15 : 9) + '" stroke="#666" stroke-opacity="' + Math.min(0.9, (i - 16) / 8) + '" stroke-width="' + (long ? 3 : 2) + '"/>';
  }
  put('ticks', s);
})();
```
